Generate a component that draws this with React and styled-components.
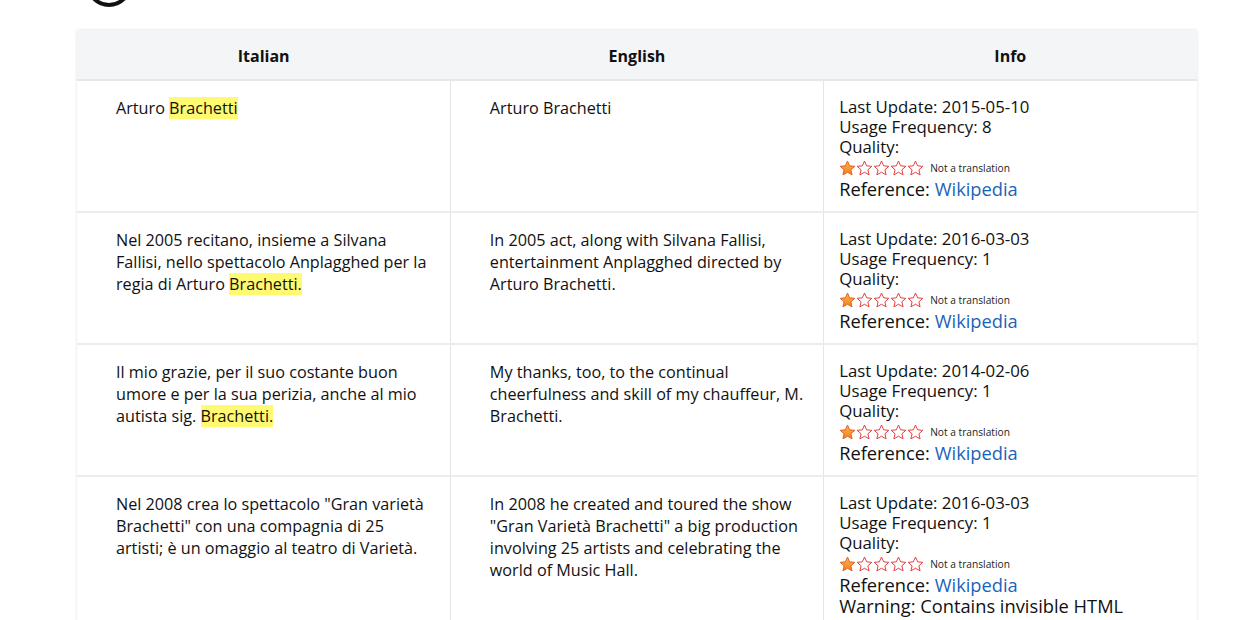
import React from "react";
import styled, { createGlobalStyle } from "styled-components";

const GlobalStyle = createGlobalStyle`
  body {
    margin: 0;
    background: #fff;
    font-family: "Open Sans", "Liberation Sans", sans-serif;
    color: #111;
  }
`;

const Page = styled.div`
  padding: 0 52px 0 77px;
`;

const LogoStrip = styled.div`
  height: 30px;
  overflow: hidden;
  padding-left: 8px;
`;

const LogoSvg = styled.svg`
  display: block;
  margin-top: -40px;
`;

const Table = styled.table`
  width: 1120px;
  border-collapse: collapse;
  table-layout: fixed;
  box-shadow: 0 0 3px rgba(0, 0, 0, 0.13);
`;

const HeadCell = styled.th`
  height: 47px;
  padding: 2px 0 0;
  background: #f4f5f7;
  border-bottom: 2px solid #e6e7ea;
  font-size: 16px;
  font-weight: 700;
  text-align: center;
  color: #111;
`;

const Row = styled.tr`
  border-bottom: 2px solid #ececec;
`;

const TextCell = styled.td`
  vertical-align: top;
  padding: 16px ${(p) => p.$padRight || 15}px 12px 39px;
  font-size: 16.2px;
  line-height: 22px;
  border-right: 1px solid #e4e4e4;
`;

const InfoCell = styled.td`
  vertical-align: top;
  padding: 16px 15px 12px 15px;
  font-size: 16.8px;
  line-height: 20px;
`;

const Mark = styled.span`
  background: #fffa70;
`;

const Line = styled.div`
  line-height: ${(p) => (p.$big ? "21px" : "20px")};
  font-size: ${(p) => (p.$big ? "18.3px" : "16.8px")};
`;

const StarsRow = styled.div`
  display: flex;
  align-items: center;
  height: 21px;
  gap: 6px;
`;

const Stars = styled.div`
  display: flex;
`;

const Note = styled.span`
  font-size: 10.2px;
  color: #222;
`;

const Link = styled.a`
  color: #1b63b8;
  text-decoration: none;
`;

const Star = ({ filled }) => (
  <svg width="17" height="16" viewBox="0 0 24 23">
    <defs>
      <linearGradient id="sg" x1="0" y1="0" x2="0" y2="1">
        <stop offset="0" stopColor="#ffb347" />
        <stop offset="1" stopColor="#f0801e" />
      </linearGradient>
    </defs>
    <path
      d="M12 1.5l3.1 6.9 7.4.7-5.6 5 1.7 7.3L12 17.6l-6.6 3.8 1.7-7.3-5.6-5 7.4-.7z"
      fill={filled ? "url(#sg)" : "#fff"}
      stroke={filled ? "#e0602a" : "#e23b3b"}
      strokeWidth="1.4"
      strokeLinejoin="round"
    />
  </svg>
);

const rows = [
  {
    it: <>Arturo <Mark>Brachetti</Mark></>,
    en: "Arturo Brachetti",
    date: "2015-05-10",
    freq: 8,
  },
  {
    it: <>Nel 2005 recitano, insieme a Silvana Fallisi, nello spettacolo Anplagghed per la regia di Arturo <Mark>Brachetti.</Mark></>,
    en: "In 2005 act, along with Silvana Fallisi, entertainment Anplagghed directed by Arturo Brachetti.",
    date: "2016-03-03",
    freq: 1,
  },
  {
    it: <>Il mio grazie, per il suo costante buon umore e per la sua perizia, anche al mio autista sig. <Mark>Brachetti.</Mark></>,
    en: "My thanks, too, to the continual cheerfulness and skill of my chauffeur, M. Brachetti.",
    date: "2014-02-06",
    freq: 1,
  },
  {
    it: <>Nel 2008 crea lo spettacolo "Gran varietà Brachetti" con una compagnia di 25 artisti; è un omaggio al teatro di Varietà.</>,
    en: "In 2008 he created and toured the show \"Gran Varietà Brachetti\" a big production involving 25 artists and celebrating the world of Music Hall.",
    date: "2016-03-03",
    freq: 1,
    warning: true,
  },
];

export default function App() {
  return (
    <>
      <GlobalStyle />
      <Page>
        <LogoStrip>
          <LogoSvg width="48" height="48" viewBox="0 0 48 48">
            <circle cx="24" cy="24" r="21" fill="none" stroke="#111" strokeWidth="4" />
          </LogoSvg>
        </LogoStrip>
        <Table>
          <thead>
            <tr>
              <HeadCell>Italian</HeadCell>
              <HeadCell>English</HeadCell>
              <HeadCell>Info</HeadCell>
            </tr>
          </thead>
          <tbody>
            {rows.map((r, i) => (
              <Row key={i}>
                <TextCell $padRight={20}>{r.it}</TextCell>
                <TextCell>{r.en}</TextCell>
                <InfoCell>
                  <Line>Last Update: {r.date}</Line>
                  <Line>Usage Frequency: {r.freq}</Line>
                  <Line>Quality:</Line>
                  <StarsRow>
                    <Stars>
                      {[0, 1, 2, 3, 4].map((s) => (
                        <Star key={s} filled={s === 0} />
                      ))}
                    </Stars>
                    <Note>Not a translation</Note>
                  </StarsRow>
                  <Line $big>
                    Reference: <Link href="#">Wikipedia</Link>
                  </Line>
                  {r.warning && <Line $big>Warning: Contains invisible HTML formatting</Line>}
                </InfoCell>
              </Row>
            ))}
          </tbody>
        </Table>
      </Page>
    </>
  );
}
